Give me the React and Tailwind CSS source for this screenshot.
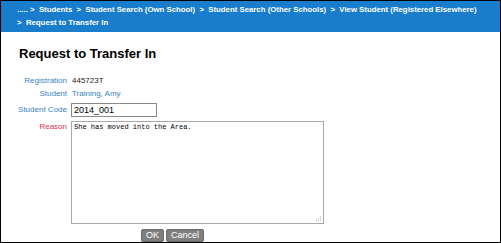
export default function App() {
  return (
    <div className="w-[501px] h-[243px] bg-white border border-black flex flex-col overflow-hidden" style={{ fontFamily: '"Liberation Sans", Arial, sans-serif' }}>
      <div className="bg-[#1a7dcc] h-[31px] pl-[16px] pt-[2px] text-white font-bold text-[7.8px] leading-[13px] flex flex-col">
        <div className="whitespace-nowrap">..... &gt;&nbsp; Students &nbsp;&gt;&nbsp; Student Search (Own School) &nbsp;&gt;&nbsp; Student Search (Other Schools) &nbsp;&gt;&nbsp; View Student (Registered Elsewhere)</div>
        <div className="whitespace-nowrap">&gt;&nbsp; Request to Transfer In</div>
      </div>
      <div className="pl-[18px] pt-[14px] text-[13px] font-bold leading-[16px] text-black">Request to Transfer In</div>
      <div className="mt-[12px] flex flex-col text-[8px] leading-[12px]">
        <div className="flex items-center h-[13px]">
          <div className="w-[66px] text-right text-[#3b82c4]">Registration</div>
          <div className="ml-[5px] text-[#222]">445723T</div>
        </div>
        <div className="flex items-center h-[13px]">
          <div className="w-[66px] text-right text-[#3b82c4]">Student</div>
          <div className="ml-[5px] text-[#3b82c4]">Training, Amy</div>
        </div>
        <div className="flex items-center mt-[3px]">
          <div className="w-[66px] text-right text-[#3b82c4]">Student Code</div>
          <div className="ml-[4px] w-[86px] h-[14px] border border-[#8a8a8a] text-[9px] leading-[12px] pl-[2px] text-black">2014_001</div>
        </div>
        <div className="flex items-start mt-[4px]">
          <div className="w-[66px] text-right text-[#d8334a]">Reason</div>
          <div className="relative ml-[4px] w-[253px] h-[103px] border border-[#a8a8a8] pl-[2px] pt-[1px] text-[7px] leading-[9px] text-black" style={{ fontFamily: '"Liberation Mono", "Courier New", monospace' }}>
            She has moved into the Area.
            <svg className="absolute right-[1px] bottom-[1px]" width="7" height="7" viewBox="0 0 7 7">
              <rect x="5" y="1" width="1" height="1" fill="#b5b5b5" />
              <rect x="3" y="3" width="1" height="1" fill="#b5b5b5" />
              <rect x="5" y="3" width="1" height="1" fill="#b5b5b5" />
              <rect x="1" y="5" width="1" height="1" fill="#b5b5b5" />
              <rect x="3" y="5" width="1" height="1" fill="#b5b5b5" />
              <rect x="5" y="5" width="1" height="1" fill="#b5b5b5" />
            </svg>
          </div>
        </div>
        <div className="flex ml-[140px] mt-[5px] gap-[2px]">
          <div className="bg-[#7f7f7f] text-white text-[9px] leading-[11px] h-[13px] px-[4px] rounded-[2px] border border-[#6a6a6a]">OK</div>
          <div className="bg-[#7f7f7f] text-white text-[9px] leading-[11px] h-[13px] px-[4px] rounded-[2px] border border-[#6a6a6a]">Cancel</div>
        </div>
      </div>
    </div>
  );
}
